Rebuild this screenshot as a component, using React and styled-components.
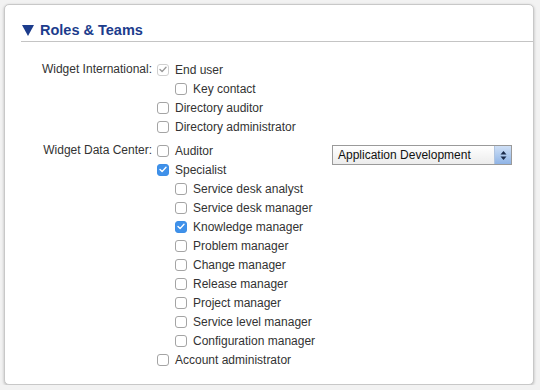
import React from 'react';
import styled, { createGlobalStyle } from 'styled-components';

const GlobalStyle = createGlobalStyle`
  html, body {
    margin: 0;
    padding: 0;
    background: #f2f2f2;
  }
  body {
    font-family: "Liberation Sans", Arial, sans-serif;
  }
`;

const groups = [
  {
    name: 'Widget International:',
    options: [
      { label: 'End user', level: 0, state: 'locked' },
      { label: 'Key contact', level: 1 },
      { label: 'Directory auditor', level: 0 },
      { label: 'Directory administrator', level: 0 },
    ],
  },
  {
    name: 'Widget Data Center:',
    team: 'Application Development',
    options: [
      { label: 'Auditor', level: 0 },
      { label: 'Specialist', level: 0, state: 'checked' },
      { label: 'Service desk analyst', level: 1 },
      { label: 'Service desk manager', level: 1 },
      { label: 'Knowledge manager', level: 1, state: 'checked' },
      { label: 'Problem manager', level: 1 },
      { label: 'Change manager', level: 1 },
      { label: 'Release manager', level: 1 },
      { label: 'Project manager', level: 1 },
      { label: 'Service level manager', level: 1 },
      { label: 'Configuration manager', level: 1 },
      { label: 'Account administrator', level: 0 },
    ],
  },
];

const Check = ({ state }) => (
  <Box $state={state}>
    {state && (
      <svg width="8" height="7" viewBox="0 0 8 7">
        <path
          d="M1 3.6 L3.1 5.6 L7 1.2"
          fill="none"
          stroke={state === 'checked' ? '#fff' : '#9a9a9a'}
          strokeWidth="1.4"
          strokeLinecap="round"
          strokeLinejoin="round"
        />
      </svg>
    )}
  </Box>
);

const App = () => {
  return (
    <>
      <GlobalStyle />
      <Panel>
        <Header>
          <svg width="12" height="11" viewBox="0 0 12 11">
            <path d="M0 0 H12 L6 11 Z" fill="#1c3c8c" />
          </svg>
          <span>Roles &amp; Teams</span>
        </Header>
        <Form>
          {groups.map((group) => (
            <Group key={group.name}>
              <GroupLabel>{group.name}</GroupLabel>
              <Options>
                {group.options.map((opt) => (
                  <Option key={opt.label} $level={opt.level}>
                    <Check state={opt.state} />
                    <OptionText>{opt.label}</OptionText>
                  </Option>
                ))}
              </Options>
              {group.team && (
                <Select>
                  <SelectText>{group.team}</SelectText>
                  <Stepper>
                    <svg width="7" height="11" viewBox="0 0 7 11">
                      <path d="M3.5 1 L6.5 4.5 H0.5 Z" fill="#1b2b4a" />
                      <path d="M3.5 10 L6.5 6.5 H0.5 Z" fill="#1b2b4a" />
                    </svg>
                  </Stepper>
                </Select>
              )}
            </Group>
          ))}
        </Form>
      </Panel>
    </>
  );
};

const Panel = styled.div`
  margin: 4px 0 0 4px;
  width: 530px;
  height: 381px;
  box-sizing: border-box;
  background: #fff;
  border: 1px solid #c8c8c8;
  border-radius: 5px;
  box-shadow: 0 1px 3px rgba(0, 0, 0, 0.25);
`;

const Header = styled.div`
  margin-left: 16px;
  padding: 16px 0 1px 1px;
  display: flex;
  align-items: center;
  gap: 6px;
  border-bottom: 1px solid #c4c4c4;
  color: #1c3c8c;
  font-size: 14.5px;
  font-weight: bold;
  line-height: 19px;
`;

const Form = styled.div`
  padding-top: 18px;
  display: flex;
  flex-direction: column;
  gap: 5px;
`;

const Group = styled.div`
  display: flex;
  align-items: flex-start;
`;

const GroupLabel = styled.div`
  width: 147px;
  text-align: right;
  font-size: 12px;
  line-height: 19px;
  color: #333;
`;

const Options = styled.div`
  width: 175px;
  margin-left: 5px;
  display: flex;
  flex-direction: column;
`;

const Option = styled.div`
  height: 19px;
  display: flex;
  align-items: center;
  padding-left: ${(p) => p.$level * 18}px;
`;

const Box = styled.span`
  width: 12px;
  height: 12px;
  box-sizing: border-box;
  display: flex;
  align-items: center;
  justify-content: center;
  border-radius: 3px;
  margin-right: 6px;
  flex-shrink: 0;
  border: 1px solid ${(p) =>
    p.$state === 'checked' ? '#3d8ee6' : p.$state === 'locked' ? '#cfcfcf' : '#a4a4a4'};
  background: ${(p) => (p.$state === 'checked' ? '#3f91ea' : '#fff')};
`;

const OptionText = styled.span`
  font-size: 12px;
  color: #333;
  white-space: nowrap;
`;

const Select = styled.div`
  margin-top: 4px;
  width: 180px;
  height: 20px;
  box-sizing: border-box;
  display: flex;
  border: 1px solid #9a9a9a;
  background: linear-gradient(#ffffff, #ececec);
`;

const SelectText = styled.span`
  flex: 1;
  padding-left: 5px;
  font-size: 12px;
  line-height: 18px;
  color: #111;
`;

const Stepper = styled.span`
  width: 16px;
  display: flex;
  align-items: center;
  justify-content: center;
  background: linear-gradient(#cfe0f6, #8fb4e6);
  border-left: 1px solid #b0c4df;
`;

export default App;
